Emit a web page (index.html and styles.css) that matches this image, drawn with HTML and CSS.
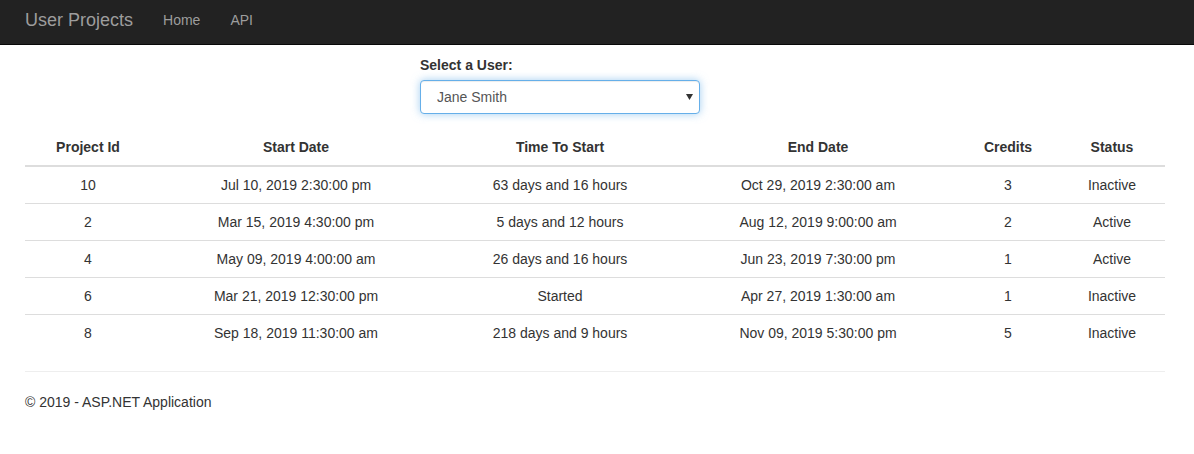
FILE: index.html
```html
<!DOCTYPE html>
<html>
<head>
<meta charset="utf-8">
<title>User Projects</title>
<link rel="stylesheet" href="styles.css">
</head>
<body>
<nav class="navbar">
  <a class="brand" href="#">User Projects</a>
  <a class="nav-link" href="#">Home</a>
  <a class="nav-link" href="#">API</a>
</nav>
<main class="body-content">
  <div class="row">
    <div class="form-group">
      <label class="label" for="user">Select a User:</label>
      <div class="select-wrap">
        <select id="user" class="form-control">
          <option>Jane Smith</option>
        </select>
        <svg class="caret" width="7" height="6" viewBox="0 0 7 6"><path d="M0 0H7L3.5 6Z" fill="#333"/></svg>
      </div>
    </div>
  </div>
  <table class="table">
    <thead>
      <tr><th>Project Id</th><th>Start Date</th><th>Time To Start</th><th>End Date</th><th>Credits</th><th>Status</th></tr>
    </thead>
    <tbody>
      <tr><td>10</td><td>Jul 10, 2019 2:30:00 pm</td><td>63 days and 16 hours</td><td>Oct 29, 2019 2:30:00 am</td><td>3</td><td>Inactive</td></tr>
      <tr><td>2</td><td>Mar 15, 2019 4:30:00 pm</td><td>5 days and 12 hours</td><td>Aug 12, 2019 9:00:00 am</td><td>2</td><td>Active</td></tr>
      <tr><td>4</td><td>May 09, 2019 4:00:00 am</td><td>26 days and 16 hours</td><td>Jun 23, 2019 7:30:00 pm</td><td>1</td><td>Active</td></tr>
      <tr><td>6</td><td>Mar 21, 2019 12:30:00 pm</td><td>Started</td><td>Apr 27, 2019 1:30:00 am</td><td>1</td><td>Inactive</td></tr>
      <tr><td>8</td><td>Sep 18, 2019 11:30:00 am</td><td>218 days and 9 hours</td><td>Nov 09, 2019 5:30:00 pm</td><td>5</td><td>Inactive</td></tr>
    </tbody>
  </table>
  <hr class="rule">
  <footer class="footer">
    <p class="copy">&copy; 2019 - ASP.NET Application</p>
  </footer>
</main>
</body>
</html>
```

FILE: styles.css
```css
* { box-sizing: border-box; }
html, body { margin: 0; padding: 0; }
body {
  font-family: "Liberation Sans", Arial, Helvetica, sans-serif;
  font-size: 14px;
  line-height: 20px;
  color: #333;
  background: #fff;
}
.navbar {
  display: flex;
  align-items: center;
  height: 45px;
  background: #222;
  border-bottom: 1px solid #080808;
  padding: 0 10px;
}
.brand {
  font-size: 18px;
  line-height: 20px;
  color: #9d9d9d;
  text-decoration: none;
  padding: 0 15px;
  margin-top: -4px;
}
.nav-link {
  color: #9d9d9d;
  text-decoration: none;
  padding: 0 15px;
  line-height: 20px;
  margin-top: -4px;
}
.body-content {
  padding: 10px 29px 0 25px;
}
.row {
  display: grid;
  grid-template-columns: 1fr 1fr 1fr;
}
.form-group {
  grid-column: 2;
  padding: 0 15px;
  margin-bottom: 15px;
}
.label {
  display: block;
  font-weight: bold;
  margin-bottom: 5px;
}
.select-wrap {
  position: relative;
  width: 280px;
}
.form-control {
  display: block;
  width: 280px;
  height: 34px;
  padding: 6px 12px 6px 16px;
  font-family: inherit;
  font-size: 14px;
  color: #555;
  background: #fff;
  border: 1px solid #66afe9;
  border-radius: 4px;
  outline: 0;
  box-shadow: inset 0 1px 1px rgba(0,0,0,.075), 0 0 8px rgba(102,175,233,.6);
  -webkit-appearance: none;
  appearance: none;
}
.caret {
  position: absolute;
  right: 7px;
  top: 14px;
}
.table {
  width: 100%;
  border-collapse: collapse;
  border-spacing: 0;
  margin-bottom: 20px;
  table-layout: fixed;
}
.table th, .table td {
  padding: 8px;
  text-align: center;
  line-height: 20px;
}
.table th {
  font-weight: bold;
  border-bottom: 2px solid #ddd;
}
.table td { border-top: 1px solid #ddd; }
.table th:nth-child(1) { width: 126px; }
.table th:nth-child(2) { width: 290px; }
.table th:nth-child(3) { width: 238px; }
.table th:nth-child(4) { width: 278px; }
.table th:nth-child(5) { width: 102px; }
.table th:nth-child(6) { width: 106px; }
.rule {
  margin: 0 0 20px;
  border: 0;
  border-top: 1px solid #eee;
}
.copy { margin: 0 0 10px; }
```
